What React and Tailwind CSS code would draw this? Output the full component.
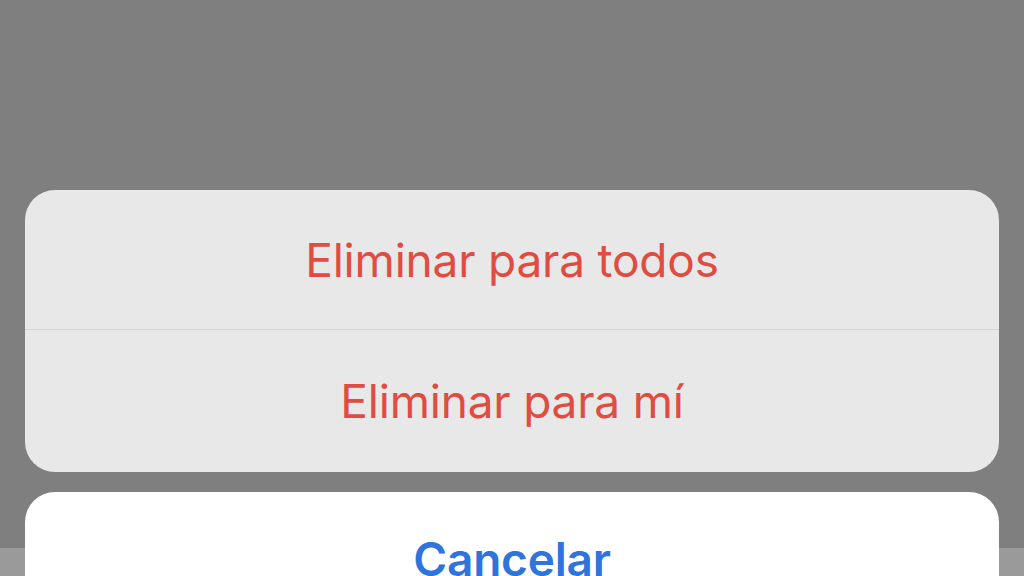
import React from 'react';

const font = { fontFamily: 'Inter, "Noto Sans", sans-serif' };

export default function App() {
  return (
    <div
      className="h-[576px] w-[1024px] overflow-hidden bg-[linear-gradient(to_bottom,#7f7f7f_548px,#9a9a9a_548px)] px-[25px] pt-[190px] flex flex-col gap-[20px]"
      style={font}
    >
      <div className="rounded-[30px] bg-[#e8e8e8] flex flex-col shrink-0">
        <div className="h-[140px] flex items-center justify-center border-b border-[#d4d4d4]">
          <span className="text-[46px] leading-none text-[#df4d42] tracking-[-0.2px]">Eliminar para todos</span>
        </div>
        <div className="h-[142px] flex items-center justify-center">
          <span className="text-[46px] leading-none text-[#df4d42] tracking-[-0.2px]">Eliminar para mí</span>
        </div>
      </div>
      <div className="rounded-t-[30px] bg-white h-[140px] shrink-0 flex justify-center pt-[44px]">
        <span className="text-[46px] leading-none font-semibold text-[#2f74dc] tracking-[-0.2px]">Cancelar</span>
      </div>
    </div>
  );
}
